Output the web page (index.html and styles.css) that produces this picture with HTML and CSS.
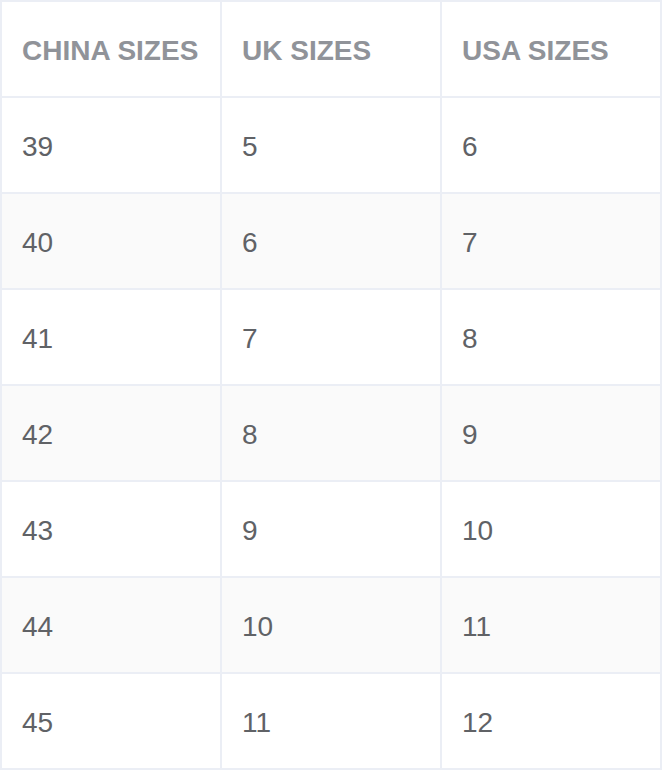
FILE: index.html
```html
<!DOCTYPE html>
<html>
<head>
<meta charset="utf-8">
<link rel="stylesheet" href="styles.css">
</head>
<body>
<table class="sizes">
  <thead>
    <tr><th>CHINA SIZES</th><th>UK SIZES</th><th>USA SIZES</th></tr>
  </thead>
  <tbody>
    <tr><td>39</td><td>5</td><td>6</td></tr>
    <tr class="stripe"><td>40</td><td>6</td><td>7</td></tr>
    <tr><td>41</td><td>7</td><td>8</td></tr>
    <tr class="stripe"><td>42</td><td>8</td><td>9</td></tr>
    <tr><td>43</td><td>9</td><td>10</td></tr>
    <tr class="stripe"><td>44</td><td>10</td><td>11</td></tr>
    <tr><td>45</td><td>11</td><td>12</td></tr>
  </tbody>
</table>
</body>
</html>
```
FILE: styles.css
```css
html, body {
  margin: 0;
  padding: 0;
  background: #ffffff;
}
.sizes {
  border-collapse: collapse;
  table-layout: fixed;
  width: 662px;
  font-family: "Liberation Sans", Arial, sans-serif;
  font-size: 28px;
}
.sizes th, .sizes td {
  border: 2px solid #ebeef5;
  height: 96px;
  padding: 4px 0 0 20px;
  text-align: left;
  vertical-align: middle;
  box-sizing: border-box;
  line-height: 1;
}
.sizes th {
  color: #909399;
  font-weight: 700;
}
.sizes td {
  color: #606266;
  font-weight: 400;
}
.sizes tr.stripe td {
  background: #fafafa;
}
```
